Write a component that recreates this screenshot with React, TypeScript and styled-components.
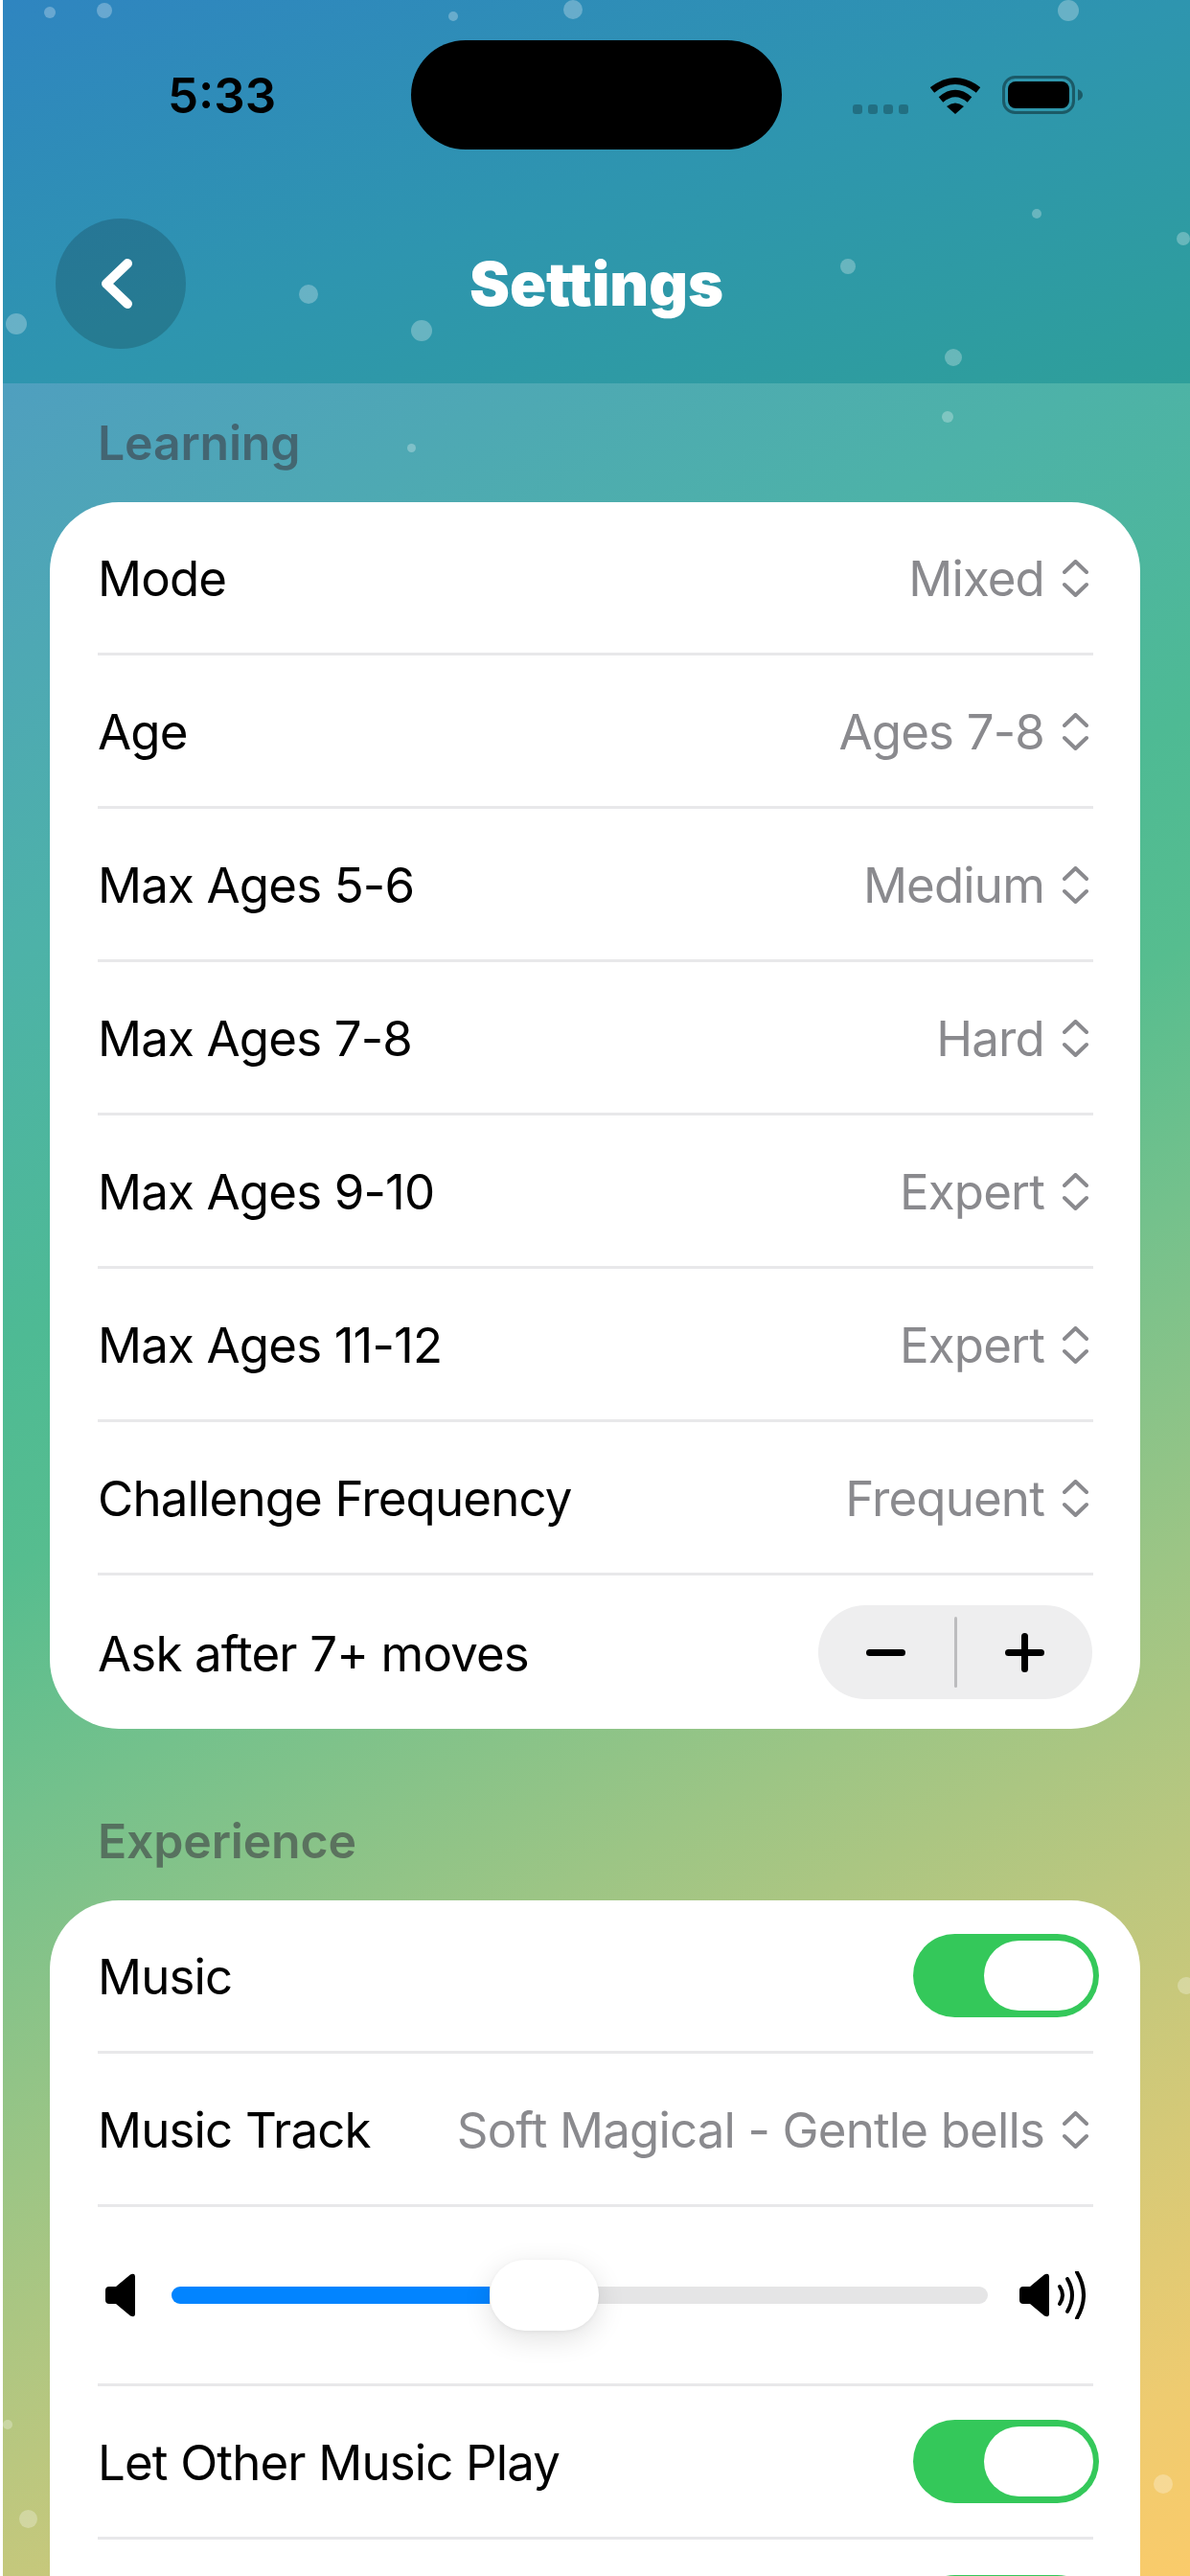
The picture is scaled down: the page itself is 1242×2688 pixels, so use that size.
import React from "react";
import styled, { createGlobalStyle } from "styled-components";

const GlobalStyle = createGlobalStyle`
  html, body {
    margin: 0;
    padding: 0;
    background: #ffffff;
    font-family: "Inter", "Liberation Sans", sans-serif;
  }
`;

const Screen = styled.div`
  position: relative;
  width: 1239px;
  height: 2688px;
  margin-left: 3px;
  overflow: hidden;
  background: linear-gradient(
    152deg,
    #3f94c8 0%,
    #4f9fbf 12%,
    #4db2a8 30%,
    #4eba94 42%,
    #56bd8f 49%,
    #74c18c 57%,
    #9cc585 68%,
    #bac77f 77%,
    #eecb70 94%,
    #facb6a 100%
  );
`;

const Particle = styled.span<{ $size: number; $x: number; $y: number }>`
  position: absolute;
  left: ${(p) => p.$x - p.$size / 2}px;
  top: ${(p) => p.$y - p.$size / 2}px;
  width: ${(p) => p.$size}px;
  height: ${(p) => p.$size}px;
  border-radius: 50%;
  background: rgba(255, 255, 255, 0.28);
`;

const Header = styled.header`
  height: 400px;
  background: linear-gradient(to bottom right, #2f85c0 0%, #2e95af 50%, #2e9f9a 100%);
`;

const StatusBar = styled.div`
  height: 156px;
  box-sizing: border-box;
  padding-top: 42px;
  display: flex;
  align-items: flex-start;
`;

const Time = styled.div`
  width: 426px;
  box-sizing: border-box;
  padding-left: 172px;
  margin-top: 28px;
  font-size: 51px;
  font-weight: 600;
  line-height: 60px;
  color: #000;
`;

const Island = styled.div`
  width: 387px;
  height: 114px;
  border-radius: 57px;
  background: #000;
`;

const StatusIcons = styled.div`
  display: flex;
  align-items: flex-end;
  margin: 38px 0 0 74px;
  height: 39px;
`;

const Dots = styled.div`
  display: flex;
  gap: 6px;
  margin-right: 23px;
`;

const Dot = styled.span`
  width: 10px;
  height: 10px;
  border-radius: 3px;
  background: rgba(0, 0, 0, 0.25);
`;

const NavBar = styled.div`
  height: 244px;
  display: flex;
  justify-content: center;
  position: relative;
`;

const BackButton = styled.div`
  position: absolute;
  left: 55px;
  top: 72px;
  width: 136px;
  height: 136px;
  padding-right: 8px;
  box-sizing: border-box;
  border-radius: 50%;
  background: rgba(0, 0, 0, 0.17);
  display: flex;
  align-items: center;
  justify-content: center;
`;

const Title = styled.h1`
  margin: 0;
  padding-top: 102px;
  font-size: 63px;
  font-weight: 900;
  line-height: 76px;
  color: #fff;
`;

const Content = styled.main`
  padding: 32px 52px 0 49px;
`;

const SectionLabel = styled.div<{ $top?: number }>`
  padding-left: 50px;
  margin-top: ${(p) => p.$top ?? 0}px;
  height: 92px;
  font-size: 50px;
  font-weight: 600;
  line-height: 60px;
  letter-spacing: -0.2px;
  color: rgba(60, 60, 67, 0.6);
`;

const Card = styled.section`
  background: #fff;
  border-radius: 72px;
  padding: 0 49px 0 50px;
`;

const Row = styled.div<{ $height?: number }>`
  height: ${(p) => p.$height ?? 157}px;
  display: flex;
  align-items: center;
  justify-content: space-between;
  border-bottom: 3px solid #e8e8ea;
  &:last-child {
    border-bottom: none;
    height: 160px;
  }
`;

const RowLabel = styled.span`
  padding-top: 2px;
  font-size: 51px;
  letter-spacing: -0.85px;
  color: #000;
`;

const PickerValue = styled.span`
  display: flex;
  align-items: center;
  gap: 19px;
  margin-right: 5px;
  padding-top: 2px;
  font-size: 51px;
  letter-spacing: -0.85px;
  color: #8a8a8e;
`;

const Stepper = styled.div`
  width: 286px;
  height: 98px;
  margin-right: 1px;
  border-radius: 49px;
  background: #eeeeef;
  display: flex;
  align-items: center;
`;

const StepperSide = styled.div`
  flex: 1;
  display: flex;
  align-items: center;
  justify-content: center;
`;

const StepperDivider = styled.div`
  width: 3px;
  height: 74px;
  border-radius: 2px;
  background: #bcbcbe;
`;

const Toggle = styled.div`
  width: 194px;
  height: 87px;
  margin-left: auto;
  margin-right: -6px;
  border-radius: 44px;
  background: #34c85a;
  position: relative;
`;

const Knob = styled.div`
  position: absolute;
  right: 6px;
  top: 7px;
  width: 114px;
  height: 73px;
  border-radius: 37px;
  background: #fff;
`;

const SliderRow = styled.div`
  display: flex;
  align-items: center;
  width: 100%;
  box-sizing: border-box;
  padding: 0 8px;
`;

const Track = styled.div`
  position: relative;
  flex: 1;
  height: 18px;
  margin: 0 33px 0 38px;
  border-radius: 9px;
  background: #e5e5e6;
`;

const TrackFill = styled.div`
  height: 100%;
  border-radius: 9px 0 0 9px;
  background: #0284ff;
`;

const Thumb = styled.div`
  position: absolute;
  top: -28px;
  width: 114px;
  height: 74px;
  border-radius: 37px;
  background: #fff;
  box-shadow: 0 8px 30px rgba(0, 0, 0, 0.12), 0 1px 4px rgba(0, 0, 0, 0.05);
`;

const particles = [
  [52, 13, 12], [109, 11, 16], [473, 17, 10], [598, 10, 20], [1115, 11, 22],
  [1082, 223, 10], [1235, 249, 14], [885, 278, 16], [322, 307, 20],
  [17, 338, 22], [440, 345, 22], [995, 373, 18], [989, 435, 12], [429, 467, 9],
  [1238, 2072, 18], [8, 2530, 10], [29, 2628, 19], [1214, 2592, 20],
].map(([x, y, size]) => ({ x: x - 3, y, size }));

const Chevrons = () => (
  <svg width="27" height="39" viewBox="0 0 27 39" fill="none" stroke="#8a8a8e" strokeWidth="4" strokeLinecap="round" strokeLinejoin="round">
    <path d="M2 13 L13.5 2 L25 13" />
    <path d="M2 26 L13.5 37 L25 26" />
  </svg>
);

const Picker: React.FC<{ label: string; value: string }> = ({ label, value }) => (
  <Row>
    <RowLabel>{label}</RowLabel>
    <PickerValue>
      {value}
      <Chevrons />
    </PickerValue>
  </Row>
);

// the last row runs off the bottom of the screen, only its toggle peeks in
const Switch: React.FC<{ label?: string }> = ({ label }) => (
  <Row>
    {label && <RowLabel>{label}</RowLabel>}
    <Toggle>
      <Knob />
    </Toggle>
  </Row>
);

const Speaker = ({ loud }: { loud?: boolean }) => (
  <svg width={loud ? 69 : 31} height="50" viewBox={loud ? "0 0 69 50" : "0 0 31 50"} fill="none">
    <path d="M4 16 H11 L26 3.5 Q31 1 31 6 V44 Q31 49 26 46.5 L11 34 H4 Q0 34 0 30 V20 Q0 16 4 16 Z" fill="#000" />
    {loud && (
      <g stroke="#000" strokeWidth="4" strokeLinecap="round">
        <path d="M42 16 Q48 25 42 34" />
        <path d="M50 8 Q60 25 50 42" />
        <path d="M60 1 Q74 25 60 49" />
      </g>
    )}
  </svg>
);

const learning = [
  ["Mode", "Mixed"],
  ["Age", "Ages 7-8"],
  ["Max Ages 5-6", "Medium"],
  ["Max Ages 7-8", "Hard"],
  ["Max Ages 9-10", "Expert"],
  ["Max Ages 11-12", "Expert"],
  ["Challenge Frequency", "Frequent"],
];

const volume = 332 / 853;

const App: React.FC = () => (
  <>
    <GlobalStyle />
    <Screen>
      <Header>
        <StatusBar>
          <Time>5:33</Time>
          <Island />
          <StatusIcons>
            <Dots>
              <Dot />
              <Dot />
              <Dot />
              <Dot />
            </Dots>
            <svg width="52" height="39" viewBox="0 0 52 39" fill="none" stroke="#000" strokeWidth="7">
              <path d="M2 14 Q26 -5 50 14" />
              <path d="M11 24 Q26 11 41 24" />
              <path d="M17 31 L26 39 L35 31 Q26 24 17 31 Z" fill="#000" stroke="none" />
            </svg>
            <svg width="85" height="40" viewBox="0 0 85 40" style={{ marginLeft: 23 }}>
              <rect x="1.5" y="1.5" width="73" height="37" rx="12" fill="none" stroke="rgba(0,0,0,0.4)" strokeWidth="3" />
              <rect x="6" y="6" width="64" height="28" rx="8" fill="#000" />
              <path d="M79 14 Q84 16 84 20 Q84 24 79 26 Z" fill="rgba(0,0,0,0.4)" />
            </svg>
          </StatusIcons>
        </StatusBar>
        <NavBar>
          <BackButton>
            <svg width="34" height="52" viewBox="0 0 34 52" fill="none" stroke="#fff" strokeWidth="10" strokeLinecap="round" strokeLinejoin="round">
              <path d="M28 5 L6 26 L28 47" />
            </svg>
          </BackButton>
          <Title>Settings</Title>
        </NavBar>
      </Header>
      <Content>
        <SectionLabel>Learning</SectionLabel>
        <Card>
          {learning.map(([label, value]) => (
            <Picker key={label} label={label} value={value} />
          ))}
          <Row>
            <RowLabel>Ask after 7+ moves</RowLabel>
            <Stepper>
              <StepperSide>
                <svg width="41" height="7" viewBox="0 0 41 7">
                  <rect width="41" height="7" rx="3.5" fill="#000" />
                </svg>
              </StepperSide>
              <StepperDivider />
              <StepperSide>
                <svg width="41" height="41" viewBox="0 0 41 41">
                  <rect width="41" height="7" rx="3.5" y="17" fill="#000" />
                  <rect width="7" height="41" rx="3.5" x="17" fill="#000" />
                </svg>
              </StepperSide>
            </Stepper>
          </Row>
        </Card>
        <SectionLabel $top={87}>Experience</SectionLabel>
        <Card>
          <Switch label="Music" />
          <Picker label="Music Track" value="Soft Magical - Gentle bells" />
          <Row $height={184}>
            <SliderRow>
              <Speaker />
              <Track>
                <TrackFill style={{ width: `${volume * 100}%` }} />
                <Thumb style={{ left: `${volume * 100}%` }} />
              </Track>
              <Speaker loud />
            </SliderRow>
          </Row>
          <Switch label="Let Other Music Play" />
          <Switch />
        </Card>
      </Content>
      {particles.map((p, i) => (
        <Particle key={i} $x={p.x} $y={p.y} $size={p.size} />
      ))}
    </Screen>
  </>
);

export default App;
